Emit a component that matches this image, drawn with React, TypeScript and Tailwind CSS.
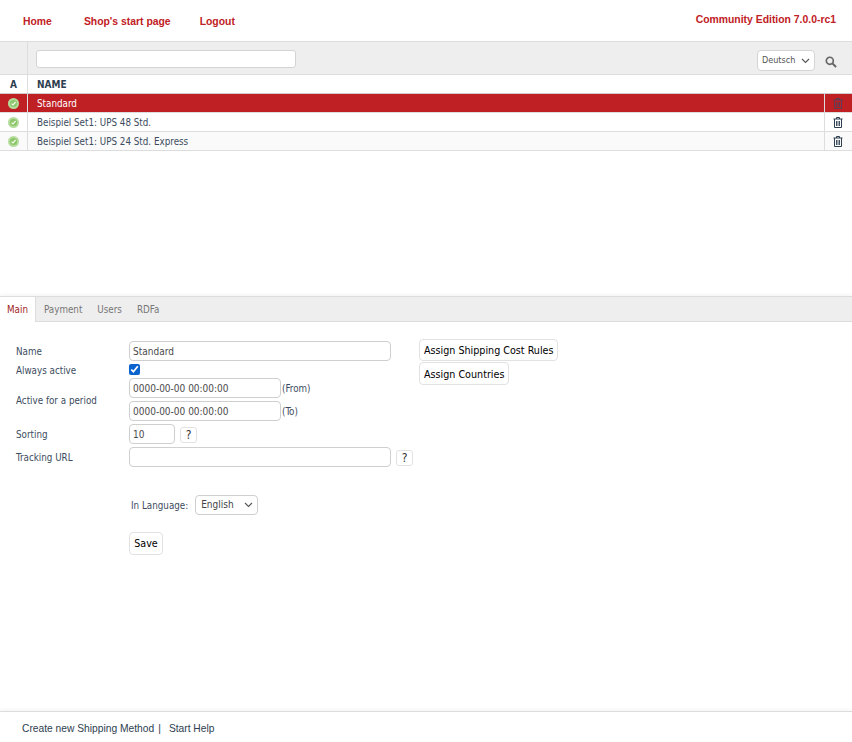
import React from "react";

const tahoma = "font-['DejaVu_Sans_Condensed','DejaVu_Sans',sans-serif]";
const arial = "font-['Liberation_Sans',sans-serif]";
const inputCls = "h-[20px] rounded-[4px] border border-[#cfcfcf] bg-white px-[3px] pt-[1px] text-[10px] text-[#4a4a4a] outline-none";

function Status() {
  return (
    <svg width="11" height="11" viewBox="0 0 11 11" className="block">
      <circle cx="5.5" cy="5.5" r="5.5" fill="#b4dc9c" />
      <circle cx="5.5" cy="5.5" r="3.6" fill="#8cc66a" />
      <path d="M3.5 5.6 L5 7 L7.6 4" fill="none" stroke="#f4faef" strokeWidth="1.2" />
    </svg>
  );
}

function Trash({ color }: { color: string }) {
  return (
    <svg width="10" height="11" viewBox="0 0 10 11" className="block" fill="none" stroke={color}>
      <path d="M0.5 2 H9.5" strokeWidth="1" />
      <path d="M3.5 2 V0.5 H6.5 V2" strokeWidth="1" />
      <path d="M1.5 2 V10.5 H8.5 V2" strokeWidth="1" />
      <path d="M3.5 4 V9 M5 4 V9 M6.5 4 V9" strokeWidth="0.9" />
    </svg>
  );
}

function Chevron() {
  return (
    <svg width="9" height="6" viewBox="0 0 9 6" fill="none" stroke="#555" strokeWidth="1.1" className="pointer-events-none absolute right-[5px] top-1/2 -translate-y-1/2">
      <path d="M1 1 L4.5 4.5 L8 1" />
    </svg>
  );
}

function Row({ name, selected, alt }: { name: string; selected?: boolean; alt?: boolean }) {
  const bg = selected ? "bg-[#bf2024]" : alt ? "bg-[#fafafa]" : "bg-white";
  return (
    <div className={`flex h-[19px] border-b border-[#dddddd] ${bg}`}>
      <div className="flex w-[28px] items-center justify-center border-r border-[#dddddd]">
        <Status />
      </div>
      <div className={`flex-1 pl-[9px] text-[9.75px] leading-[19px] ${selected ? "text-white" : "text-[#3c4c5e]"}`}>{name}</div>
      <div className="flex w-[28px] items-center justify-center border-l border-[#dddddd] pr-[1px]">
        <Trash color={selected ? "#5a3d55" : "#2d3e50"} />
      </div>
    </div>
  );
}

function Help() {
  return (
    <button className="flex h-[16px] w-[17px] items-center justify-center rounded-[3px] border border-[#e2e2e2] bg-white text-[12px] text-[#333]">?</button>
  );
}

function Label({ children, className = "" }: { children: React.ReactNode; className?: string }) {
  return <div className={`w-[113px] shrink-0 text-[9.75px] text-[#3c4c5e] ${className}`}>{children}</div>;
}

export default function App() {
  return (
    <div className={`flex h-[742px] w-[852px] flex-col overflow-hidden bg-white ${tahoma}`}>
      <header className={`flex h-[41px] shrink-0 items-start justify-between pl-[23px] pr-[16px] text-[10.4px] font-bold text-[#bf2024] ${arial}`}>
        <nav className="mt-[15px] flex gap-[32px] leading-[13px]">
          <span>Home</span>
          <span>Shop's start page</span>
          <span className="-ml-[3px]">Logout</span>
        </nav>
        <div className="mt-[13px] leading-[13px]">Community Edition 7.0.0-rc1</div>
      </header>

      <div className="flex h-[34px] shrink-0 border-y border-[#dddddd] bg-[#eeeeee]">
        <div className="w-[28px] border-r border-[#dddddd]" />
        <div className="flex flex-1 items-start justify-between pl-[8px] pr-[15px] pt-[8px]">
          <input className="h-[18px] w-[260px] rounded-[3px] border border-[#d4d4d4] bg-white" />
          <div className="flex items-center gap-[10px]">
            <div className="relative">
              <select className="block h-[21px] w-[58px] appearance-none rounded-[4px] border border-[#d4d4d4] bg-white pl-[4px] text-[9px] text-[#555]">
                <option>Deutsch</option>
              </select>
              <Chevron />
            </div>
            <svg width="12" height="12" viewBox="0 0 13 13" fill="none" stroke="#666" strokeWidth="1.8" className="mt-[2px]">
              <circle cx="5.2" cy="5.2" r="3.8" />
              <path d="M8 8 L12 12" strokeWidth="2.2" />
            </svg>
          </div>
        </div>
      </div>

      <div className="flex h-[19px] shrink-0 border-b border-[#cccccc] text-[10px] font-bold leading-[19px] text-[#2d3e50]">
        <div className="w-[28px] border-r border-[#dddddd] text-center">A</div>
        <div className="flex-1 pl-[9px]">NAME</div>
      </div>
      <Row name="Standard" selected />
      <Row name="Beispiel Set1: UPS 48 Std." />
      <Row name="Beispiel Set1: UPS 24 Std. Express" alt />

      <div className="h-[145px] shrink-0" />

      <div className="flex h-[26px] shrink-0 border-y border-[#dddddd] bg-[#eeeeee] text-[9.75px] leading-[25px] text-[#777] shadow-[0_-2px_3px_rgba(0,0,0,0.04)]">
        <div className="-mb-[1px] w-[36px] border-r border-[#dddddd] bg-white text-center text-[#a11c20]">Main</div>
        <div className="ml-[8px] flex gap-[15px]">
          <span>Payment</span>
          <span>Users</span>
          <span>RDFa</span>
        </div>
      </div>

      <main className="flex-1 pl-[16px] pt-[18px]">
        <div className="flex items-start">
          <div className="w-[403px] shrink-0">
            <div className="flex h-[21px] items-center">
              <Label className="mt-[3px]">Name</Label>
              <input className={`${inputCls} w-[262px]`} defaultValue="Standard" />
            </div>
            <div className="flex h-[16px] items-center">
              <Label className="mt-[4px]">Always active</Label>
              <input type="checkbox" defaultChecked className="h-[11px] w-[11px] accent-[#0b63ce]" />
            </div>
            <div className="mt-[1px] flex items-center">
              <Label className="mt-[3px]">Active for a period</Label>
              <div className="flex flex-col gap-[3px]">
                <div className="flex items-center gap-[1px]">
                  <input className={`${inputCls} w-[152px]`} defaultValue="0000-00-00 00:00:00" />
                  <span className="mt-[3px] text-[9.75px] text-[#3c4c5e]">(From)</span>
                </div>
                <div className="flex items-center gap-[1px]">
                  <input className={`${inputCls} w-[152px]`} defaultValue="0000-00-00 00:00:00" />
                  <span className="mt-[2px] text-[9.75px] text-[#3c4c5e]">(To)</span>
                </div>
              </div>
            </div>
            <div className="mt-[3px] flex h-[20px] items-center">
              <Label className="mt-[3px]">Sorting</Label>
              <input className={`${inputCls} w-[46px]`} defaultValue="10" />
              <div className="ml-[5px] mt-[1px]"><Help /></div>
            </div>
            <div className="mt-[3px] flex h-[20px] items-center">
              <Label className="mt-[3px]">Tracking URL</Label>
              <input className={`${inputCls} w-[262px]`} />
              <div className="ml-[5px] mt-[1px]"><Help /></div>
            </div>
            <div className="ml-[115px] mt-[28px] flex h-[20px] items-center gap-[7px]">
              <span className="mt-[2px] text-[9.75px] text-[#3c4c5e]">In Language:</span>
              <div className="relative">
                <select className="block h-[20px] w-[63px] appearance-none rounded-[4px] border border-[#cfcfcf] bg-white pb-[2px] pl-[5px] text-[10px] text-[#444]">
                  <option>English</option>
                </select>
                <Chevron />
              </div>
            </div>
            <button className="ml-[113px] mt-[17px] h-[23px] w-[34px] rounded-[4px] border border-[#e2e2e2] bg-white pt-[1px] text-[10.67px] text-black">Save</button>
          </div>
          <div className="flex flex-col items-start gap-[1px] text-[10.67px] text-black">
            <button className="-mt-[1px] h-[22px] rounded-[4px] border border-[#e2e2e2] bg-white px-[4px] pt-[1px]">Assign Shipping Cost Rules</button>
            <button className="h-[23px] rounded-[4px] border border-[#e2e2e2] bg-white px-[4px] pt-[2px]">Assign Countries</button>
          </div>
        </div>
      </main>

      <footer className={`flex h-[31px] shrink-0 items-center gap-[4px] border-t border-[#dddddd] pl-[22px] pt-[3px] text-[10.25px] text-[#2d3e50] shadow-[0_-2px_3px_rgba(0,0,0,0.04)] ${arial}`}>
        <span>Create new Shipping Method</span>
        <span>|</span>
        <span className="ml-[4px]">Start Help</span>
      </footer>
    </div>
  );
}
